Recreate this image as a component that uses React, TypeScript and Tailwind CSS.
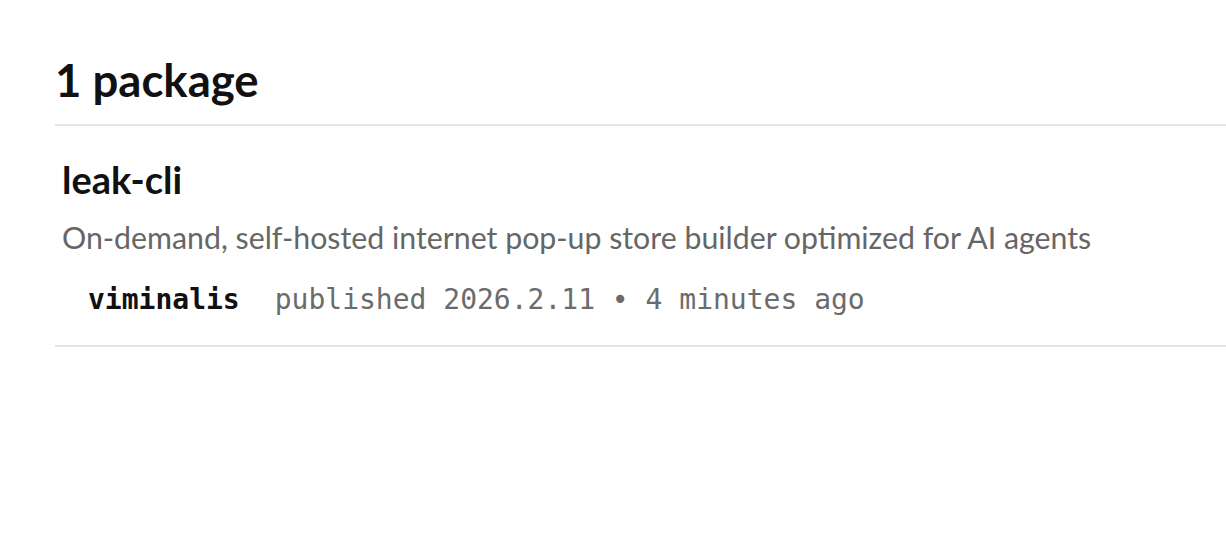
export default function App() {
  return (
    <div className="w-[1226px] h-[536px] bg-white overflow-hidden">
      <div className="pl-[55px] pt-[52px]">
        <h2 className="font-['Lato',sans-serif] font-bold text-[45.5px] leading-[56px] text-[#111] pb-[16px] border-b-2 border-[#e5e5e5]">
          1 package
        </h2>
        <section className="pl-[7px] pt-[30px] pb-[25px] border-b-2 border-[#e5e5e5]">
          <h3 className="font-['Lato',sans-serif] font-bold text-[38px] leading-[46px] text-[#111]">
            leak-cli
          </h3>
          <p className="mt-[15px] font-['Lato',sans-serif] text-[30.3px] leading-[40px] text-[#666]">
            On-demand, self-hosted internet pop-up store builder optimized for AI agents
          </p>
          <div className="mt-[23px] pl-[26px] flex items-baseline font-['DejaVu_Sans_Mono',monospace] text-[28px] leading-[40px]">
            <span className="font-semibold text-[#111]">viminalis</span>
            <span className="ml-[35px] text-[#6b6b6b]">published 2026.2.11 • 4 minutes ago</span>
          </div>
        </section>
      </div>
    </div>
  );
}
